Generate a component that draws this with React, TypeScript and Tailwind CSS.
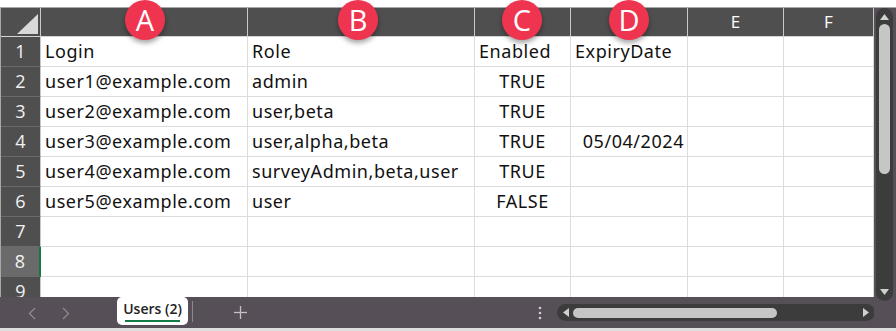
import React from "react";

const cols = [
  { key: "A", w: 207, align: "left" },
  { key: "B", w: 227, align: "left" },
  { key: "C", w: 96, align: "center" },
  { key: "D", w: 117, align: "right" },
  { key: "E", w: 96, align: "left" },
  { key: "F", w: 90, align: "left" },
];

const rows: string[][] = [
  ["Login", "Role", "Enabled", "ExpiryDate", "", ""],
  ["user1@example.com", "admin", "TRUE", "", "", ""],
  ["user2@example.com", "user,beta", "TRUE", "", "", ""],
  ["user3@example.com", "user,alpha,beta", "TRUE", "05/04/2024", "", ""],
  ["user4@example.com", "surveyAdmin,beta,user", "TRUE", "", "", ""],
  ["user5@example.com", "user", "FALSE", "", "", ""],
  ["", "", "", "", "", ""],
  ["", "", "", "", "", ""],
  ["", "", "", "", "", ""],
];

const cellFont = { fontFamily: '"Noto Sans", "Open Sans", sans-serif' };

function Badge({ letter, x }: { letter: string; x: number }) {
  return (
    <div
      className="absolute top-0 w-[40px] h-[40px] rounded-full bg-[#ef3450] flex items-center justify-center text-white text-[29px] leading-none shadow-[0_3px_5px_rgba(0,0,0,0.35)] z-20"
      style={{ left: x - 20, fontFamily: '"Open Sans", sans-serif' }}
    >
      <span className="-mt-[2px]">{letter}</span>
    </div>
  );
}

export default function App() {
  return (
    <div className="relative w-[896px] h-[331px] bg-white overflow-hidden">
      <Badge letter="A" x={145} />
      <Badge letter="B" x={358} />
      <Badge letter="C" x={522} />
      <Badge letter="D" x={629} />
      <div className="h-[7px]" />
      <div className="flex border-t border-[#a8a8a8] h-[321px]">
        <div className="flex flex-col w-[874px]">
          {/* sheet */}
          <div className="h-[290px] overflow-hidden border-l border-[#a8a8a8] flex flex-col">
            {/* column header */}
            <div className="flex h-[29px] shrink-0 bg-[#4f4f4f] border-b border-[#d4d4d4]">
              <div className="w-[40px] shrink-0 border-r border-[#c8c8c8] relative">
                <svg className="absolute left-[16px] top-[6px]" width="21" height="20" viewBox="0 0 21 20">
                  <polygon points="21,0 21,20 0,20" fill="#d9d9d9" />
                </svg>
              </div>
              {cols.map((c) => (
                <div
                  key={c.key}
                  className="shrink-0 border-r border-[#c8c8c8] flex items-center justify-center text-white text-[17px]"
                  style={{ width: c.w, fontFamily: '"Open Sans", sans-serif' }}
                >
                  {c.key === "E" || c.key === "F" ? c.key : ""}
                </div>
              ))}
            </div>
            {rows.map((r, i) => (
              <div key={i} className="flex h-[30px] shrink-0">
                <div
                  className={
                    "w-[40px] shrink-0 flex items-center justify-center text-[18px] text-[#f2f2f2] border-b border-[#6a6a6a] " +
                    (i === 7
                      ? "bg-[#6a6a6a] border-r-2 border-r-[#107c41]"
                      : "bg-[#4f4f4f] border-r border-r-[#c8c8c8]")
                  }
                  style={{ fontFamily: '"Open Sans", sans-serif' }}
                >
                  {i + 1}
                </div>
                {cols.map((c, j) => (
                  <div
                    key={c.key}
                    className={
                      "shrink-0 border-r border-b border-[#dcdcdc] flex items-center text-[18px] tracking-[0.55px] text-[#111] whitespace-nowrap " +
                      (i === 0 || c.align === "left"
                        ? "justify-start pl-[4px]"
                        : c.align === "center"
                        ? "justify-center"
                        : "justify-end pr-[3px]")
                    }
                    style={{ width: c.w, ...cellFont }}
                  >
                    {r[j]}
                  </div>
                ))}
              </div>
            ))}
          </div>
          {/* tab bar */}
          <div className="h-[31px] bg-[#574f57] flex items-center relative">
            <svg className="absolute left-[28px] top-[10px]" width="8" height="13" viewBox="0 0 8 13">
              <polyline points="7,1 1.5,6.5 7,12" fill="none" stroke="#8e8a8e" strokeWidth="1.3" />
            </svg>
            <svg className="absolute left-[62px] top-[10px]" width="8" height="13" viewBox="0 0 8 13">
              <polyline points="1,1 6.5,6.5 1,12" fill="none" stroke="#8e8a8e" strokeWidth="1.3" />
            </svg>
            <div className="absolute left-[117px] top-0 w-[71px] h-[28px] bg-white rounded-[5px] flex flex-col items-center">
              <span
                className="text-[14px] text-[#222] mt-[3px] leading-[18px] font-semibold"
                style={{ fontFamily: '"Open Sans", sans-serif' }}
              >
                Users (2)
              </span>
              <div className="w-[55px] h-[2px] bg-[#107c41] mt-[2px]" />
            </div>
            <div className="absolute left-[192px] top-[4px] w-[1px] h-[21px] bg-[#8a8a8a]" />
            <svg className="absolute left-[234px] top-[9px]" width="13" height="13" viewBox="0 0 13 13">
              <line x1="6.5" y1="0" x2="6.5" y2="13" stroke="#c4c0c4" strokeWidth="1.3" />
              <line x1="0" y1="6.5" x2="13" y2="6.5" stroke="#c4c0c4" strokeWidth="1.3" />
            </svg>
            <svg className="absolute left-[538px] top-[9px]" width="4" height="14" viewBox="0 0 4 14">
              <circle cx="2" cy="2" r="1.3" fill="#d0ccd0" />
              <circle cx="2" cy="7" r="1.3" fill="#d0ccd0" />
              <circle cx="2" cy="12" r="1.3" fill="#d0ccd0" />
            </svg>
            <div className="absolute left-[557px] top-[7px] w-[318px] h-[17px] rounded-full bg-[#3c3c3c] flex items-center">
              <svg className="ml-[6px]" width="6" height="9" viewBox="0 0 6 9">
                <polygon points="6,0 6,9 0,4.5" fill="#d0d0d0" />
              </svg>
              <div className="ml-[4px] w-[204px] h-[10px] rounded-full bg-[#c6c6c6]" />
              <div className="flex-1" />
              <svg className="mr-[6px]" width="6" height="9" viewBox="0 0 6 9">
                <polygon points="0,0 6,4.5 0,9" fill="#d0d0d0" />
              </svg>
            </div>
          </div>
        </div>
        {/* right scrollbar column */}
        <div className="w-[22px] bg-[#574f57] relative">
          <div className="absolute left-[2px] top-0 w-[17px] h-[293px] rounded-full bg-[#3c3c3c] flex flex-col items-center">
            <svg className="mt-[6px]" width="9" height="6" viewBox="0 0 9 6">
              <polygon points="0,6 9,6 4.5,0" fill="#d0d0d0" />
            </svg>
            <div className="mt-[4px] w-[11px] h-[150px] rounded-full bg-[#c6c6c6]" />
            <div className="flex-1" />
            <svg className="mb-[6px]" width="9" height="6" viewBox="0 0 9 6">
              <polygon points="0,0 9,0 4.5,6" fill="#d0d0d0" />
            </svg>
          </div>
        </div>
      </div>
      <div className="h-[3px] bg-[#dedede]" />
    </div>
  );
}
